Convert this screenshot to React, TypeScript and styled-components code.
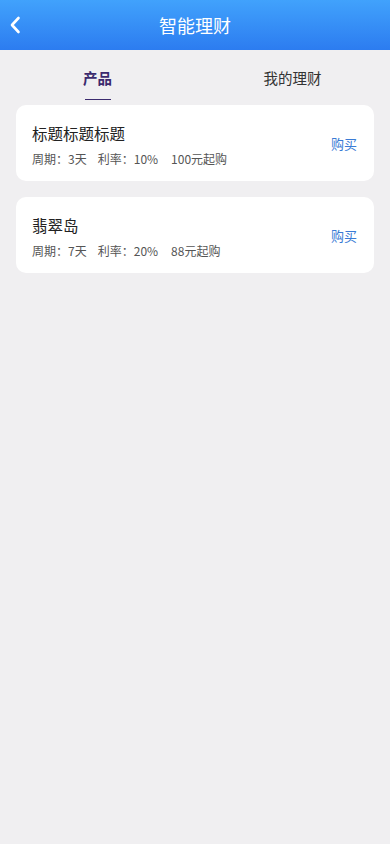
import React, { useState } from 'react';
import styled, { createGlobalStyle } from 'styled-components';

const GlobalStyle = createGlobalStyle`
  html, body {
    margin: 0;
    padding: 0;
    background: #f0eff1;
    font-family: "Noto Sans CJK SC", "Noto Sans", "Liberation Sans", sans-serif;
  }
`;

interface Product {
  name: string;
  days: number;
  rate: string;
  min: number;
}

const products: Product[] = [
  { name: '标题标题标题', days: 3, rate: '10%', min: 100 },
  { name: '翡翠岛', days: 7, rate: '20%', min: 88 },
];

export default function App() {
  const [tab, setTab] = useState(0);
  return (
    <Page>
      <GlobalStyle />
      <Header>
        <BackButton aria-label="back">
          <svg width="12" height="18" viewBox="0 0 12 18">
            <path d="M9.5 2 L3 9 L9.5 16" fill="none" stroke="#fff" strokeWidth="2.6" strokeLinecap="round" strokeLinejoin="round" />
          </svg>
        </BackButton>
        <Title>智能理财</Title>
      </Header>
      <Tabs>
        <Tab active={tab === 0} onClick={() => setTab(0)}>产品</Tab>
        <Tab active={tab === 1} onClick={() => setTab(1)}>我的理财</Tab>
      </Tabs>
      <List>
        {products.map(p => (
          <Card key={p.name}>
            <Info>
              <Name>{p.name}</Name>
              <Meta>
                <span>周期：{p.days}天</span>
                <span>利率：{p.rate}</span>
                <span>{p.min}元起购</span>
              </Meta>
            </Info>
            <Buy>购买</Buy>
          </Card>
        ))}
      </List>
    </Page>
  );
}

const Page = styled.div`
  min-height: 844px;
  background: #f0eff1;
`;

const Header = styled.div`
  position: relative;
  height: 50px;
  display: flex;
  align-items: center;
  justify-content: center;
  background: linear-gradient(180deg, #41a2fc 0%, #2c7cf0 100%);
`;

const BackButton = styled.div`
  position: absolute;
  left: 9px;
  top: 15px;
  width: 14px;
  height: 18px;
`;

const Title = styled.h1`
  margin: 0;
  color: #fff;
  font-size: 18px;
  font-weight: 400;
`;

const Tabs = styled.div`
  display: flex;
  height: 51px;
`;

const Tab = styled.div<{ active: boolean }>`
  flex: 1;
  display: flex;
  align-items: center;
  justify-content: center;
  position: relative;
  padding-top: 3px;
  font-size: 14.5px;
  font-weight: ${p => (p.active ? 700 : 400)};
  color: ${p => (p.active ? '#3b2a6e' : '#333')};
  cursor: pointer;
  &::after {
    content: '';
    display: ${p => (p.active ? 'block' : 'none')};
    position: absolute;
    left: 50%;
    bottom: 1px;
    width: 26px;
    height: 1px;
    margin-left: -13px;
    background: #3b2a6e;
  }
`;

const List = styled.div`
  display: flex;
  flex-direction: column;
  gap: 16px;
  padding: 4px 16px 0;
`;

const Card = styled.div`
  display: flex;
  align-items: center;
  justify-content: space-between;
  height: 76px;
  padding: 0 16px;
  box-sizing: border-box;
  background: #fff;
  border-radius: 10px;
`;

const Info = styled.div`
  display: flex;
  flex-direction: column;
  gap: 8px;
  padding-top: 4px;
`;

const Name = styled.div`
  font-size: 15.5px;
  color: #222;
  line-height: 20px;
`;

const Meta = styled.div`
  display: flex;
  gap: 11px;
  font-size: 12px;
  color: #555;
  line-height: 16px;
  & > span:last-child {
    margin-left: 2px;
  }
`;

const Buy = styled.div`
  font-size: 13px;
  color: #3a7bd5;
  margin-right: 1px;
  cursor: pointer;
`;
